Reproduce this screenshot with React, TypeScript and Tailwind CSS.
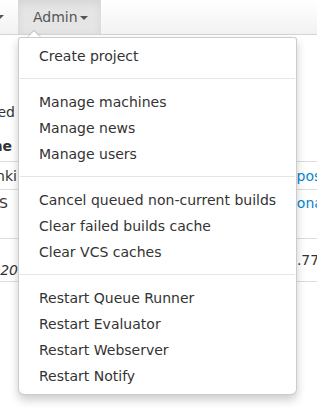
import { Fragment } from "react";

const font = "font-['DejaVu_Sans',Verdana,sans-serif]";

const groups: string[][] = [
  ["Create project"],
  ["Manage machines", "Manage news", "Manage users"],
  ["Cancel queued non-current builds", "Clear failed builds cache", "Clear VCS caches"],
  ["Restart Queue Runner", "Restart Evaluator", "Restart Webserver", "Restart Notify"],
];

function Caret({ className = "" }: { className?: string }) {
  return (
    <span
      className={`inline-block h-0 w-0 border-x-[4px] border-t-[4px] border-x-transparent border-t-[#555] ${className}`}
    />
  );
}

function AdminMenu() {
  return (
    <div className="absolute left-[18px] top-[37px] w-[279px]">
      {/* little pointer above the menu */}
      <div className="absolute -top-[7px] left-[9px] h-0 w-0 border-x-[7px] border-b-[7px] border-x-transparent border-b-black/20" />
      <div className="absolute -top-[6px] left-[10px] h-0 w-0 border-x-[6px] border-b-[6px] border-x-transparent border-b-white" />
      <ul className="rounded-t-[3px] rounded-b-[6px] border border-black/20 bg-white py-[5px] shadow-[0_5px_10px_rgba(0,0,0,0.2)]">
        {groups.map((items, gi) => (
          <Fragment key={gi}>
            {gi > 0 ? <li className="mx-px my-[9px] h-[2px] border-b border-white bg-[#e5e5e5]" /> : null}
            {items.map((label) => (
              <li key={label} className="whitespace-nowrap px-5 py-[3px] text-[14px] leading-5 text-[#333]">
                {label}
              </li>
            ))}
          </Fragment>
        ))}
      </ul>
    </div>
  );
}

function Row({
  left,
  right,
  className,
  leftClass = "",
  rightClass = "",
}: {
  left: string;
  right?: string;
  className: string;
  leftClass?: string;
  rightClass?: string;
}) {
  return (
    <div className={`flex ${className}`}>
      <div className={`flex w-[18px] justify-end overflow-hidden whitespace-nowrap ${leftClass}`}>{left}</div>
      <div className="flex-1" />
      <div className={`w-[29px] overflow-hidden whitespace-nowrap ${rightClass}`}>{right}</div>
    </div>
  );
}

export default function App() {
  return (
    <div className={`relative h-[410px] w-[317px] overflow-hidden bg-white ${font} text-[14px] leading-5 text-[#333]`}>
      <div className="flex h-[35px] border-b border-[#d4d4d4] bg-gradient-to-b from-white to-[#f2f2f2]">
        <div className="flex w-[18px] items-center">
          <Caret className="-ml-[4px]" />
        </div>
        <div className="flex w-[83px] items-center gap-[2px] bg-[#e5e5e5] pl-[15px] text-[#555] shadow-[inset_0_3px_8px_rgba(0,0,0,0.08)]">
          Admin
          <Caret className="mt-[1px]" />
        </div>
      </div>

      <div className="h-[67px]" />
      <Row left="Finished" className="h-5 items-center" leftClass="pr-[3px]" />
      <Row
        left="Name"
        className="h-[40px] items-end border-b border-[#ddd] pb-[5px]"
        leftClass="pr-[6px] font-bold"
      />
      <Row
        left="hydra-tunki"
        right="epos"
        className="h-[28px] items-center border-b border-[#ddd]"
        leftClass="pr-px"
        rightClass="text-[#0088cc]"
      />
      <Row
        left="VCS"
        right="nona"
        className="h-[49px] items-start border-b border-[#ddd] pt-[3px]"
        leftClass="pr-[10px]"
        rightClass="text-[#0088cc]"
      />
      <Row
        left="2020"
        right="1.77"
        className="h-[43px] items-end border-b border-[#ddd] pb-[1px]"
        leftClass="italic"
        rightClass="pb-[10px]"
      />

      <AdminMenu />
    </div>
  );
}
